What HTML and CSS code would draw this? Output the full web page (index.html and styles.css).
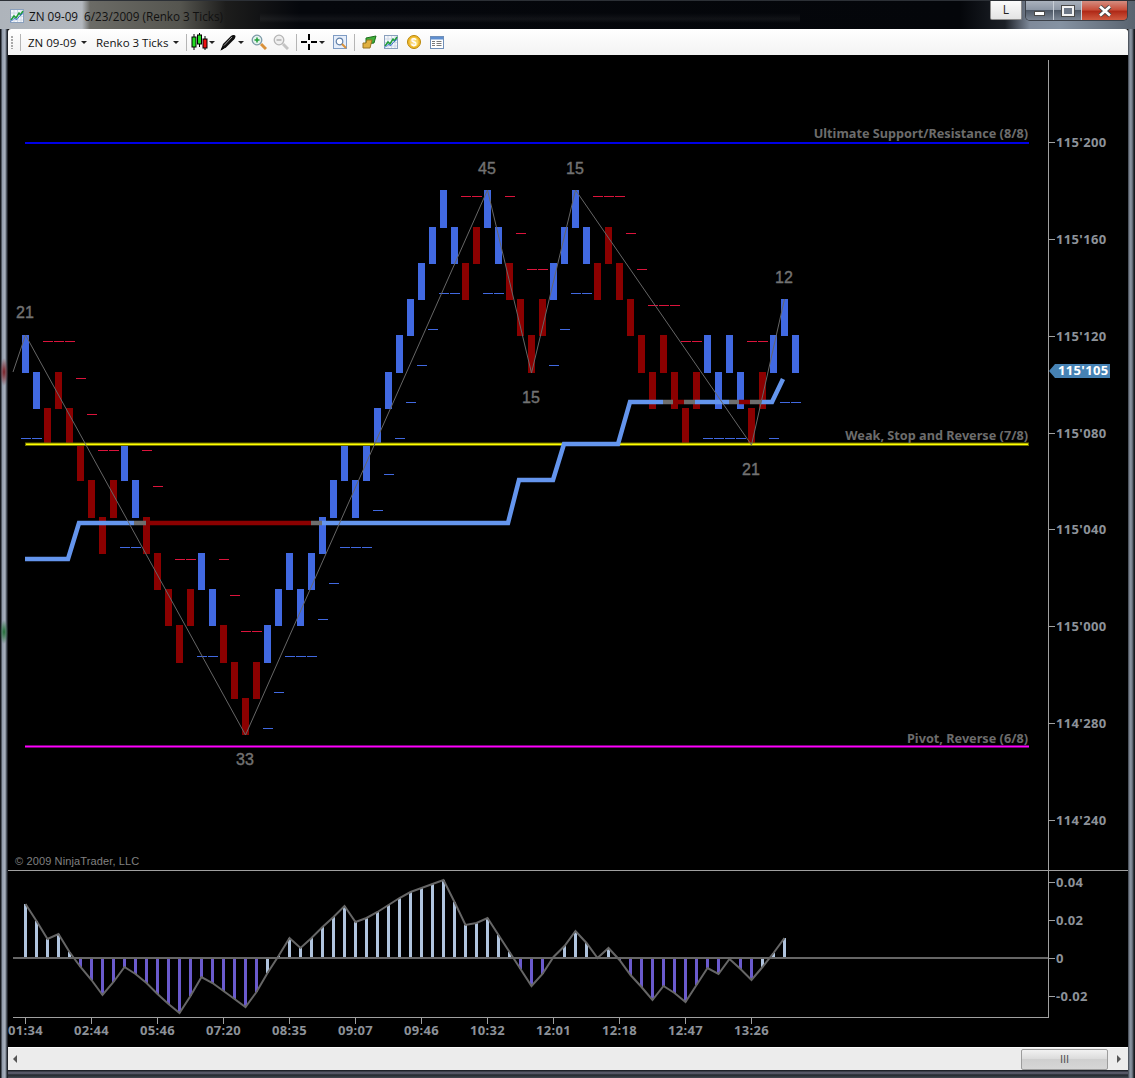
FILE: index.html
```html
<!DOCTYPE html>
<html lang="en">
<head>
  <meta charset="UTF-8" />
  <title>ZN 09-09 6/23/2009 (Renko 3 Ticks)</title>
  <link rel="stylesheet" href="styles.css">
</head>
<body>
  <svg class="defs" width="0" height="0">
    <symbol id="ico-chart" viewBox="0 0 14 14">
      <rect x="0.5" y="0.5" width="13" height="13" fill="#f4f7fb" stroke="#8aa0bd"/>
      <path d="M4 1v12M7.500 1v12M11 1v12M1 4h12M1 7.500h12M1 11h12" stroke="#cfd8e6" fill="none"/>
      <path d="M1 11l3-4 2 2 3-5 1.500 2L13 2" stroke="#1f9e3a" stroke-width="1.500" fill="none"/>
      <path d="M1 12.500l3-3 3 1 3-4 3-2" stroke="#3a6fd0" fill="none"/>
    </symbol>
  </svg>

  <div class="window">
    <div class="titlebar">
      <svg class="title-icon" width="14" height="14"><use href="#ico-chart"/></svg>
      <span class="title-text">ZN 09-09  6/23/2009 (Renko 3 Ticks)</span>
      <span class="link-btn">L</span>
      <div class="win-btns">
        <span class="win-btn"><i class="min-glyph"></i></span>
        <span class="win-btn"><i class="max-glyph"></i></span>
        <span class="win-btn close">
          <svg width="14" height="12" viewBox="0 0 14 12"><path d="M2 1.500l10 9M12 1.500l-10 9" stroke="#4a4a4a" stroke-width="4.500"/><path d="M2 1.500l10 9M12 1.500l-10 9" stroke="#fff" stroke-width="2.600"/></svg>
        </span>
      </div>
    </div>

    <div class="toolbar">
      <span class="grip"></span>
      <span class="sep first"></span>
      <span class="tool-text">ZN 09-09</span><i class="caret"></i>
      <span class="tool-text wide">Renko 3 Ticks</span><i class="caret"></i>
      <span class="sep after-caret"></span>
      <svg class="tool" width="17" height="18" viewBox="0 0 17 18">
        <path d="M3 1v16M8.500 0v14M14 3v14" stroke="#000"/>
        <rect x="1" y="4" width="4" height="10" fill="#22dd22" stroke="#000"/>
        <rect x="6.500" y="2" width="4" height="9" fill="#22dd22" stroke="#000"/>
        <rect x="12" y="6" width="4" height="9" fill="#ee1111" stroke="#000"/>
      </svg>
      <i class="caret near"></i>
      <svg class="tool" width="16" height="17" viewBox="0 0 16 17">
        <path d="M0.500 16.500L3 10 11 2c1.500-1.500 4.500-1.500 4.500 .5 0 1-1 2.500-2 3.500L6 13.500z" fill="#111"/>
        <path d="M4 11.500l8-8.500" stroke="#9a9a9a"/>
        <path d="M0.500 16.500l3.500-2-1.500-1.500z" fill="#000"/>
      </svg>
      <i class="caret pen-caret"></i>
      <svg class="tool zoom-in" width="16" height="16" viewBox="0 0 16 16">
        <path d="M10 10l5 5" stroke="#d9913a" stroke-width="3"/>
        <circle cx="6" cy="6" r="4.800" fill="#e4f2ee" stroke="#7d9aa8" stroke-width="1.300"/>
        <path d="M3.500 6h5M6 3.500v5" stroke="#1f9e3a" stroke-width="1.500"/>
      </svg>
      <svg class="tool zoom-out" width="16" height="16" viewBox="0 0 16 16">
        <path d="M10 10l5 5" stroke="#c4c4c4" stroke-width="3"/>
        <circle cx="6" cy="6" r="4.800" fill="#efefef" stroke="#b5b5b5" stroke-width="1.300"/>
        <path d="M3.500 6h5" stroke="#b0b0b0" stroke-width="1.500"/>
      </svg>
      <span class="sep"></span>
      <svg class="tool" width="16" height="16" viewBox="0 0 16 16">
        <path d="M0 8h6M10 8h6M8 0v6M8 10v6" stroke="#000" stroke-width="2"/>
      </svg>
      <i class="caret pen-caret"></i>
      <svg class="tool props" width="14" height="14" viewBox="0 0 14 14">
        <rect x="0.500" y="0.500" width="13" height="13" fill="#e6eefa" stroke="#7f9cc4"/>
        <circle cx="6.500" cy="6.500" r="3.300" fill="#fff" stroke="#5f7fa8" stroke-width="1.200"/>
        <path d="M9 9l4 4" stroke="#d9913a" stroke-width="2"/>
      </svg>
      <span class="sep"></span>
      <svg class="tool money" width="15" height="14" viewBox="0 0 15 14">
        <path d="M4 3l10-2-2 7-8 1z" fill="#3fae3a" stroke="#1d6f1d"/>
        <path d="M1 8h3l1-3h5l-2 8H1z" fill="#e0b040" stroke="#9a7420"/>
      </svg>
      <svg class="tool spaced" width="14" height="14"><use href="#ico-chart"/></svg>
      <svg class="tool spaced" width="14" height="14" viewBox="0 0 14 14">
        <circle cx="7" cy="7" r="6.500" fill="#f0b92a" stroke="#b8860b"/>
        <circle cx="7" cy="7" r="4.500" fill="#f8d468"/>
        <text class="coin" x="7" y="10.500">$</text>
      </svg>
      <svg class="tool" width="14" height="13" viewBox="0 0 14 13">
        <rect x="0.500" y="0.500" width="13" height="12" fill="#fff" stroke="#6f8fb8"/>
        <rect x="1" y="1" width="12" height="2.500" fill="#5f8fd0"/>
        <path d="M2 5.500h3M6.500 5.500h5M2 7.500h3M6.500 7.500h5M2 9.500h3M6.500 9.500h5" stroke="#7a7a7a"/>
      </svg>
    </div>

    <svg id="chart" class="chart" viewBox="8 55 1120 992" width="1120" height="992"></svg>

    <div class="scrollbar">
      <i class="arrow left"></i>
      <div class="thumb"><span>III</span></div>
      <i class="arrow right"></i>
    </div>
  </div>

  <script src="chart.js"></script>
</body>
</html>
```

FILE: styles.css
```css
* { box-sizing: border-box; }

body {
  margin: 0;
  background: #000;
  font-family: "Liberation Sans", sans-serif;
}

.defs { position: absolute; }

.window {
  width: 1135px;
  height: 1078px;
  padding: 0 7px 8px 8px;
  display: flex;
  flex-direction: column;
  overflow: hidden;
  background:
    radial-gradient(ellipse 4px 14px at 4px 372px, #7a1c22 0, transparent 100%),
    radial-gradient(ellipse 4px 12px at 4px 632px, #1f6d34 0, transparent 100%),
    linear-gradient(90deg, #15181d 0, #15181d 1px, #8f99a8 2px, #aab3c0 5px, #30363f 7px, #0c0e12 8px, transparent 8px),
    linear-gradient(270deg, #101216 0, #1c2026 1px, #79838f 3px, #8d97a4 5px, #3a4049 7px, transparent 7px),
    linear-gradient(0deg, #444a52 0, #23272d 3px, #667 5px, #12151a 8px, transparent 8px),
    #000;
}

/* title bar */
.titlebar {
  height: 29px;
  margin: 0 -7px 0 -8px;
  padding: 0 7px 0 10px;
  display: flex;
  align-items: flex-start;
  border-top: 1px solid #2c3036;
  background:
    linear-gradient(0deg, transparent 6px, rgba(255,255,255,0.05) 10px, transparent 16px) 260px 0 / 540px 100% no-repeat,
    linear-gradient(90deg, #aeb4bb 0, #b3b8be 82px, #6b6b66 90px, #55554f 180px, #1d1d1c 226px, #05070c 300px, #04060a 960px, #1c2027 1005px, #7f8a9a 1030px, #8592a2 1060px, #59636f 1135px);
}

.title-icon { margin: 8px 5px 0 0; flex: none; }

.title-text {
  margin-top: 7px;
  font: 11.7px "Open Sans", sans-serif;
  white-space: pre;
  color: #111;
  flex: 1;
}

.link-btn {
  width: 32px;
  height: 19px;
  margin-right: 3px;
  border: 1px solid #8c8c8c;
  border-top: 0;
  border-radius: 0 0 2px 2px;
  background: linear-gradient(180deg, #fbfbfb, #e3e3e3);
  font: 12px "Open Sans", sans-serif;
  line-height: 18px;
  text-align: center;
  color: #222;
}

.win-btns {
  display: flex;
  width: 103px;
  height: 20px;
  border: 1px solid #3b4048;
  border-top: 0;
  border-radius: 0 0 5px 5px;
  overflow: hidden;
}

.win-btn {
  width: 28px;
  display: flex;
  align-items: center;
  justify-content: center;
  border-right: 1px solid #c8ced6;
  background: linear-gradient(180deg, #aab2bd 0, #8d97a5 45%, #4f5967 50%, #7b8593 100%);
}

.win-btn.close {
  flex: 1;
  border-right: 0;
  background: linear-gradient(180deg, #d58d80 0, #c9503c 45%, #b02a18 55%, #d05a40 100%);
}

.min-glyph {
  width: 11px;
  height: 5px;
  margin-top: 5px;
  background: #fff;
  border: 1px solid #4a4a4a;
}

.max-glyph {
  width: 12px;
  height: 10px;
  border: 2px solid #f2f2f2;
  outline: 1px solid #4a4a4a;
  background: #6e7887;
}

/* toolbar */
.toolbar {
  height: 26px;
  padding-left: 3px;
  display: flex;
  align-items: center;
  flex: none;
  border-radius: 3px 3px 0 0;
  background: linear-gradient(180deg, #ffffff, #f3f3f3);
}

.grip {
  width: 2px;
  height: 13px;
  background: repeating-linear-gradient(180deg, #a9a9a9 0, #a9a9a9 2px, transparent 2px, transparent 3px);
}

.sep {
  width: 1px;
  height: 17px;
  margin: 0 4px 0 7px;
  background: #b5b5b5;
}

.sep.first { margin: 0 7px 0 7px; }
.sep.after-caret { margin-left: -2px; }

.tool-text {
  width: 48px;
  font: 11.5px "Open Sans", sans-serif;
  white-space: nowrap;
  color: #111;
}

.tool-text.wide { width: 72px; }

.caret {
  width: 6px;
  height: 0;
  margin: 1px 9px 0 5px;
  border: 3px solid transparent;
  border-top: 3px solid #222;
  border-bottom: 0;
}

.caret.near { margin: 1px 5px 0 1px; }
.caret.pen-caret { margin: 1px 0 0 2px; }

.tool { flex: none; display: block; }
.zoom-in { margin-left: 7px; }
.zoom-out { margin-left: 6px; }
.props { margin-left: 8px; }
.money { margin: 0 7px 0 3px; }
.spaced { margin-right: 9px; }

.coin {
  font: bold 10px "Liberation Sans", sans-serif;
  text-anchor: middle;
  fill: #fff;
}

/* chart */
.chart {
  display: block;
  flex: none;
  background: #000;
  font-family: "Noto Sans", sans-serif;
}

.bar-up { fill: #4169e1; }
.bar-down { fill: #8b0000; }
.dash-up { fill: #4169e1; }
.dash-down { fill: #dc143c; }

.zigzag { fill: none; stroke: #666; stroke-width: 1; }
.zz-label { font: 16px "Liberation Sans", sans-serif; fill: #727272; text-anchor: middle; stroke: #727272; stroke-width: 0.4; }

.level-blue { fill: #0000e6; }
.level-magenta { fill: #ff00ff; }
.level-yellow { fill: #ffff00; stroke: #6e6e00; stroke-width: 1; }
.level-label { font-size: 12.7px; font-weight: bold; fill: #6c6c6c; text-anchor: end; }

.trend { fill: none; stroke-width: 4.5; stroke-linejoin: miter; }
.trend-blue { stroke: #6495ed; }
.trend-red { stroke: #8b0000; }
.trend-gray { stroke: #6e6e6e; }

.axis { fill: #a0a0a0; }
.axis-label { font-size: 13px; font-weight: bold; fill: #8d9299; letter-spacing: 0.35px; }
.time-label { text-anchor: middle; }
.copyright { font: 11px "Liberation Sans", sans-serif; fill: #808080; letter-spacing: 0.13px; }
.flag { fill: #4682b4; }
.flag-label { font-size: 13px; font-weight: bold; fill: #fff; letter-spacing: 0.35px; }

.hist-up { fill: #b0c4de; }
.hist-down { fill: #6a5acd; }
.hist-zero { fill: #666; }
.hist-line { fill: none; stroke: #666; stroke-width: 2; }

/* scrollbar */
.scrollbar {
  height: 23px;
  flex: none;
  display: flex;
  align-items: center;
  background: #ececec;
  border-top: 1px solid #fafafa;
}

.arrow {
  width: 0;
  height: 0;
  border: 4px solid transparent;
}

.arrow.left { margin-left: 5px; margin-right: auto; border-left: 0; border-right: 4px solid #555; }
.arrow.right { margin-left: 9px; margin-right: 7px; border-right: 0; border-left: 4px solid #555; }

.thumb {
  width: 87px;
  height: 21px;
  border: 1px solid #9c9c9c;
  border-radius: 2px;
  background: linear-gradient(180deg, #f2f2f2, #dcdcdc 45%, #cfcfcf 50%, #d6d6d6);
  text-align: center;
  font: 11px "Liberation Sans", sans-serif;
  line-height: 18px;
  color: #555;
}
```

FILE: chart.js
```js
// top and bottom pixel of each renko brick level
const tops = [190, 227, 263, 299, 335, 372, 408, 444, 480, 517, 553, 589, 625, 662, 698];
const bottoms = [228, 264, 300, 336, 373, 409, 445, 481, 518, 554, 590, 626, 663, 699, 735];

// u = up brick, d = down brick, number = level index, one per column
const bars = "u4 u5 d6 d5 d6 d7 d8 d9 d8 u7 u8 d9 d10 d11 d12 d11 u10 u11 d12 d13 d14 d13 u12 u11 u10 u11 u10 u9 u8 u7 u8 u7 u6 u5 u4 u3 u2 u1 u0 u1 d2 d1 u0 u1 d2 d3 d4 d3 u2 u1 u0 u1 d2 d1 d2 d3 d4 d5 d4 d5 d6 d5 u4 u5 u4 u5 d6 d5 u4 u3 u4".split(" ");

// [y, up?, columns]
const dashes = [
  [196, 0, [40, 41, 44, 52, 53, 54]],
  [233, 0, [45, 55]],
  [269, 0, [46, 47, 56]],
  [293, 1, [38, 39, 42, 43, 50, 51]],
  [305, 0, [57, 58, 59]],
  [329, 1, [37, 49]],
  [341, 0, [2, 3, 4, 60, 61, 66, 67]],
  [365, 1, [36, 48]],
  [378, 0, [5]],
  [402, 1, [35, 69, 70]],
  [414, 0, [6]],
  [438, 1, [0, 1, 34, 62, 63, 64, 65, 68]],
  [450, 0, [7, 8, 11]],
  [474, 1, [33]],
  [486, 0, [12]],
  [510, 1, [32]],
  [547, 1, [9, 10, 29, 30, 31]],
  [559, 0, [14, 15, 18]],
  [583, 1, [28]],
  [595, 0, [19]],
  [619, 1, [27]],
  [631, 0, [20, 21]],
  [656, 1, [16, 17, 24, 25, 26]],
  [692, 1, [23]],
  [728, 1, [22]]
];

// pixel y of the oscillator for each column, zero line is at 958
const hist = [904, 921, 939, 934, 952, 967, 980, 995, 982, 967, 974, 983, 994, 1004, 1013, 996, 977, 983, 991, 999, 1007, 992, 973, 956, 938, 948, 938, 927, 917, 906, 922, 918, 912, 905, 898, 892, 888, 884, 880, 902, 925, 923, 918, 935, 952, 969, 986, 974, 957, 946, 931, 943, 958, 948, 960, 975, 987, 1000, 986, 993, 1002, 985, 968, 974, 959, 969, 980, 967, 953, 938];
const lightBelowZero = [22, 67];

const prices = [[142, "115'200"], [239, "115'160"], [336, "115'120"], [433, "115'080"], [529, "115'040"], [626, "115'000"], [723, "114'280"], [820, "114'240"]];
const oscLabels = [[882, "0.04"], [920, "0.02"], [958, "0"], [996, "-0.02"]];
const times = ["01:34", "02:44", "05:46", "07:20", "08:35", "09:07", "09:46", "10:32", "12:01", "12:18", "12:47", "13:26"];

function rect(cls, x, y, w, h) {
  return `<rect class="${cls}" x="${x}" y="${y}" width="${w}" height="${h}"/>`;
}

function text(cls, x, y, s) {
  return `<text class="${cls}" x="${x}" y="${y}">${s}</text>`;
}

function line(cls, pts) {
  return `<polyline class="${cls}" points="${pts}"/>`;
}

let out = "";

// bricks
bars.forEach(function (b, i) {
  let k = parseInt(b.slice(1));
  out += rect(b[0] === "u" ? "bar-up" : "bar-down", 22 + 11 * i, tops[k], 7, bottoms[k] - tops[k]);
});

// small dashes next to the bricks
for (let d of dashes) {
  for (let c of d[2]) {
    out += rect(d[1] ? "dash-up" : "dash-down", 21 + 11 * c, d[0], 10, 1);
  }
}

// murrey math levels
out += rect("level-blue", 25, 142, 1004, 2);
out += rect("level-yellow", 25.5, 443, 1003, 2.5);
out += rect("level-magenta", 25, 745.500, 1004, 2);
out += text("level-label", 1028, 138, "Ultimate Support/Resistance (8/8)");
out += text("level-label", 1028, 440, "Weak, Stop and Reverse (7/8)");
out += text("level-label", 1028, 743, "Pivot, Reverse (6/8)");

// trend line
out += line("trend trend-blue", "25,559 68,559 79,523 134,523");
out += line("trend trend-gray", "134,523 146,523");
out += line("trend trend-red", "146,523 311,523");
out += line("trend trend-gray", "311,523 322,523");
out += line("trend trend-blue", "322,523 508,523 519,480 553,480 564,444 618,444 630,402 663,402");
out += line("trend trend-gray", "663,402 673,402");
out += line("trend trend-red", "673,402 684,402");
out += line("trend trend-gray", "684,402 695,402");
out += line("trend trend-blue", "695,402 729,402");
out += line("trend trend-gray", "729,402 739,402");
out += line("trend trend-red", "739,402 750,402");
out += line("trend trend-gray", "750,402 761,402");
out += line("trend trend-blue", "761,402 772,402 783,379");

// zigzag and its swing labels
out += line("zigzag", "13,372 25.5,335 245.5,735 487.5,190 531.5,373 575.5,190 751.5,445 784.5,299");
out += text("zz-label", 25, 318, "21");
out += text("zz-label", 487, 174, "45");
out += text("zz-label", 575, 174, "15");
out += text("zz-label", 784, 283, "12");
out += text("zz-label", 531, 403, "15");
out += text("zz-label", 751, 475, "21");
out += text("zz-label", 245, 765, "33");
out += text("copyright", 15, 865, "© 2009 NinjaTrader, LLC");

// axes
out += rect("axis", 1048, 60, 1, 958);
out += rect("axis", 8, 870, 1120, 1);
out += rect("axis", 13, 1017, 1035, 1);

for (let p of prices) {
  out += rect("axis", 1049, p[0], 6, 1);
  out += text("axis-label", 1056, p[0] + 5, p[1]);
}
for (let p of oscLabels) {
  out += rect("axis", 1049, p[0], 6, 1);
  out += text("axis-label", 1056, p[0] + 5, p[1]);
}
times.forEach(function (t, i) {
  let x = 25 + 66 * i;
  out += rect("axis", x, 1018, 1, 6);
  out += text("axis-label time-label", x + 0.5, 1035, t);
});

// current price flag
out += `<polygon class="flag" points="1049,371 1055,364 1110,364 1110,378 1055,378"/>`;
out += text("flag-label", 1058, 375, "115'105");

// oscillator
hist.forEach(function (y, i) {
  let up = y < 958 || lightBelowZero.includes(i);
  out += rect(up ? "hist-up" : "hist-down", 24 + 11 * i, Math.min(y, 958), 3, Math.abs(y - 958));
});
out += rect("hist-zero", 13, 957, 1035, 2);
out += line("hist-line", hist.map(function (y, i) { return (25.5 + 11 * i) + "," + y; }).join(" "));

document.getElementById("chart").innerHTML = out;
```
